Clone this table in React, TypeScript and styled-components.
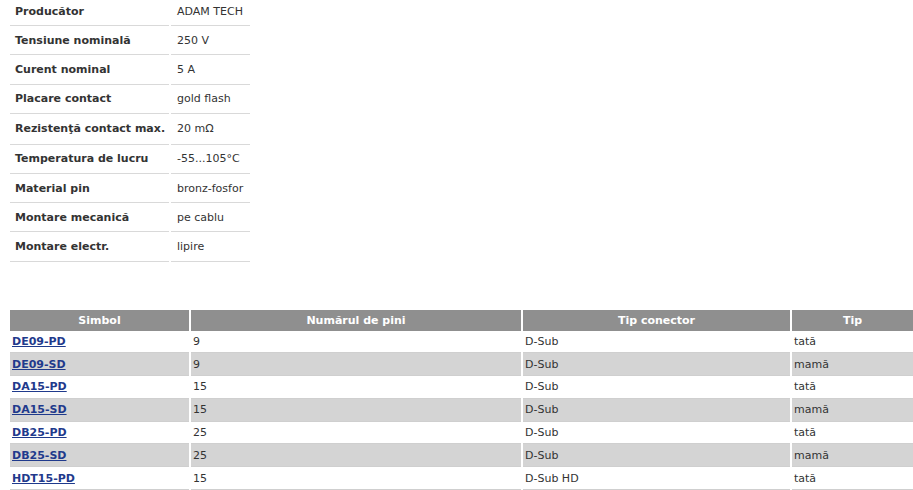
import React from "react";
import styled, { createGlobalStyle } from "styled-components";

const Global = createGlobalStyle`
  html, body { margin: 0; padding: 0; background: #fff; overflow: hidden; }
  body { padding: 0 8px; font-family: "DejaVu Sans", Verdana, sans-serif; font-size: 11px; color: #333; }
`;

const Page = styled.div`
  display: flex;
  flex-direction: column;
  gap: 48px;
`;

const SpecTable = styled.table`
  border-collapse: separate;
  border-spacing: 2px 0;
  margin-top: -3px;
  width: 244px;
  table-layout: fixed;
`;

const SpecRow = styled.tr<{ $tall?: boolean }>`
  height: ${(p) => (p.$tall ? 31 : 29.2)}px;
`;

const SpecLabel = styled.td`
  width: 149px;
  padding: 0 5px;
  font-weight: bold;
  color: #333;
  border-bottom: 1px solid #d9d9d9;
  white-space: nowrap;
  vertical-align: middle;
`;

const SpecValue = styled.td`
  padding: 0 6px;
  color: #333;
  border-bottom: 1px solid #d9d9d9;
  white-space: nowrap;
  vertical-align: middle;
`;

const ProductTable = styled.table`
  border-collapse: separate;
  border-spacing: 2px 0;
  table-layout: fixed;
  width: 907px;
`;

const HeadCell = styled.th<{ $w: number }>`
  width: ${(p) => p.$w}px;
  height: 21px;
  padding: 0;
  background: #8f8f8f;
  color: #fff;
  font-weight: bold;
  text-align: center;
  vertical-align: middle;
`;

const ProdRow = styled.tr<{ $alt: boolean }>`
  height: 22.8px;
  background: ${(p) => (p.$alt ? "#d4d4d4" : "#fff")};
`;

const Cell = styled.td`
  padding: 0 2px;
  color: #333;
  border-bottom: 1px solid #cfcfcf;
  vertical-align: middle;
  white-space: nowrap;
`;

const CodeLink = styled.a`
  color: #1f3a8c;
  font-weight: bold;
  text-decoration: underline;
`;

const specs: [string, string][] = [
  ["Producător", "ADAM TECH"],
  ["Tensiune nominală", "250 V"],
  ["Curent nominal", "5 A"],
  ["Placare contact", "gold flash"],
  ["Rezistenţă contact max.", "20 mΩ"],
  ["Temperatura de lucru", "-55...105°C"],
  ["Material pin", "bronz-fosfor"],
  ["Montare mecanică", "pe cablu"],
  ["Montare electr.", "lipire"],
];

const products = [
  ["DE09-PD", "9", "D-Sub", "tată"],
  ["DE09-SD", "9", "D-Sub", "mamă"],
  ["DA15-PD", "15", "D-Sub", "tată"],
  ["DA15-SD", "15", "D-Sub", "mamă"],
  ["DB25-PD", "25", "D-Sub", "tată"],
  ["DB25-SD", "25", "D-Sub", "mamă"],
  ["HDT15-PD", "15", "D-Sub HD", "tată"],
];

export default function App() {
  return (
    <>
      <Global />
      <Page>
        <SpecTable>
          <tbody>
            {specs.map(([k, v], i) => (
              <SpecRow key={k} $tall={i === 4}>
                <SpecLabel>{k}</SpecLabel>
                <SpecValue>{v}</SpecValue>
              </SpecRow>
            ))}
          </tbody>
        </SpecTable>
        <ProductTable>
          <thead>
            <tr>
              <HeadCell $w={179}>Simbol</HeadCell>
              <HeadCell $w={330}>Numărul de pini</HeadCell>
              <HeadCell $w={267}>Tip conector</HeadCell>
              <HeadCell $w={121}>Tip</HeadCell>
            </tr>
          </thead>
          <tbody>
            {products.map((p, i) => (
              <ProdRow key={p[0]} $alt={i % 2 === 1}>
                <Cell>
                  <CodeLink href="#">{p[0]}</CodeLink>
                </Cell>
                <Cell>{p[1]}</Cell>
                <Cell>{p[2]}</Cell>
                <Cell>{p[3]}</Cell>
              </ProdRow>
            ))}
          </tbody>
        </ProductTable>
      </Page>
    </>
  );
}
